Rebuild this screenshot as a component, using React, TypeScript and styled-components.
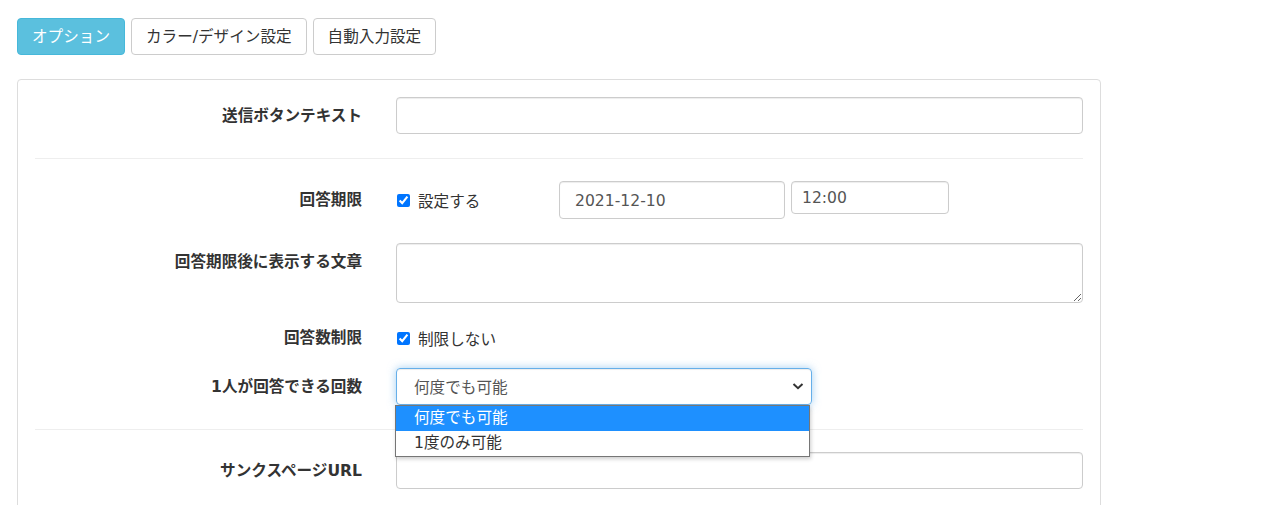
import React from "react";
import styled, { createGlobalStyle } from "styled-components";

const GlobalStyle = createGlobalStyle`
  body {
    margin: 0;
    background: #fff;
    font-family: "DejaVu Sans", "Noto Sans CJK JP", sans-serif;
    color: #333;
  }
`;

const Page = styled.div`
  padding: 18px 17px 0;
  height: 505px;
  box-sizing: border-box;
  overflow: hidden;
`;

const Tabs = styled.div`
  display: flex;
  gap: 6px;
  margin-bottom: 24px;
`;

const Tab = styled.button<{ $active?: boolean }>`
  height: 37px;
  padding: 0 14px;
  font-family: inherit;
  font-size: 15.6px;
  line-height: 22px;
  border-radius: 4px;
  border: 1px solid ${(p) => (p.$active ? "#46b8da" : "#ccc")};
  background: ${(p) => (p.$active ? "#5bc0de" : "#fff")};
  color: ${(p) => (p.$active ? "#fff" : "#333")};
  cursor: pointer;
`;

const Panel = styled.div`
  width: 1084px;
  box-sizing: border-box;
  border: 1px solid #ddd;
  border-radius: 4px;
  padding: 0 17px;
  height: 460px;
`;

const Section = styled.div<{ $pt: number; $pb: number }>`
  padding-top: ${(p) => p.$pt}px;
  padding-bottom: ${(p) => p.$pb}px;
  & + & {
    border-top: 1px solid #eee;
  }
`;

const Row = styled.div<{ $mb?: number }>`
  display: grid;
  grid-template-columns: 327px 687px;
  column-gap: 34px;
  align-items: start;
  margin-bottom: ${(p) => p.$mb ?? 0}px;
`;

const Label = styled.div<{ $pt?: number }>`
  text-align: right;
  font-weight: 700;
  font-size: 15.6px;
  line-height: 22px;
  padding-top: ${(p) => p.$pt ?? 8}px;
  color: #333;
`;

const TextInput = styled.input<{ $w?: number; $h?: number; $pl?: number }>`
  box-sizing: border-box;
  width: ${(p) => (p.$w ? `${p.$w}px` : "100%")};
  height: ${(p) => p.$h ?? 37}px;
  padding: 1px ${(p) => p.$pl ?? 12}px 0;
  border: 1px solid #ccc;
  border-radius: 4px;
  box-shadow: inset 0 1px 1px rgba(0, 0, 0, 0.075);
  font-family: inherit;
  font-size: 15.6px;
  color: #555;
  outline: none;
  display: block;
`;

const TextArea = styled.textarea`
  box-sizing: border-box;
  width: 100%;
  height: 60px;
  padding: 6px 12px;
  border: 1px solid #ccc;
  border-radius: 4px;
  box-shadow: inset 0 1px 1px rgba(0, 0, 0, 0.075);
  font-family: inherit;
  font-size: 15.6px;
  resize: vertical;
  display: block;
  outline: none;
`;

const Inline = styled.div`
  display: flex;
  align-items: flex-start;
  gap: 6px;
`;

const CheckLabel = styled.label<{ $h: number; $w?: number }>`
  display: flex;
  align-items: center;
  height: ${(p) => p.$h}px;
  width: ${(p) => (p.$w ? `${p.$w}px` : "auto")};
  font-size: 15.6px;
  color: #333;
  gap: 8px;

  input {
    margin: 1px 0 0 1px;
    width: 13px;
    height: 13px;
    accent-color: #0075ff;
  }
`;

const SelectWrap = styled.div`
  position: relative;
  width: 416px;
`;

const SelectBox = styled.div`
  box-sizing: border-box;
  height: 37px;
  border: 1px solid #66afe9;
  border-radius: 4px;
  box-shadow: inset 0 1px 1px rgba(0, 0, 0, 0.075),
    0 0 8px rgba(102, 175, 233, 0.6);
  display: flex;
  align-items: center;
  justify-content: space-between;
  padding: 0 6px 1px 17px;
  font-size: 15.6px;
  color: #555;
`;

const Dropdown = styled.ul`
  position: absolute;
  top: 37px;
  left: -1px;
  width: 415px;
  box-sizing: border-box;
  margin: 0;
  padding: 0;
  list-style: none;
  background: #fff;
  border: 1px solid #767676;
  box-shadow: 1px 2px 4px rgba(0, 0, 0, 0.2);
  z-index: 2;
`;

const Option = styled.li<{ $selected?: boolean }>`
  height: 25px;
  line-height: 25px;
  padding-left: 18px;
  font-size: 15.6px;
  background: ${(p) => (p.$selected ? "#1e90ff" : "#fff")};
  color: ${(p) => (p.$selected ? "#fff" : "#333")};
`;

const Chevron = () => (
  <svg width="14" height="14" viewBox="0 0 14 14">
    <path
      d="M2.5 5 L7 9.2 L11.5 5"
      fill="none"
      stroke="#333"
      strokeWidth="2"
      strokeLinejoin="miter"
    />
  </svg>
);

export default function App() {
  return (
    <Page>
      <GlobalStyle />
      <Tabs>
        <Tab $active>オプション</Tab>
        <Tab>カラー/デザイン設定</Tab>
        <Tab>自動入力設定</Tab>
      </Tabs>
      <Panel>
        <Section $pt={17} $pb={24}>
          <Row>
            <Label>送信ボタンテキスト</Label>
            <TextInput type="text" />
          </Row>
        </Section>
        <Section $pt={22} $pb={24}>
          <Row $mb={24}>
            <Label>回答期限</Label>
            <Inline>
              <CheckLabel $h={38} $w={157}>
                <input type="checkbox" checked readOnly />
                設定する
              </CheckLabel>
              <TextInput type="text" $w={226} $h={38} $pl={15} defaultValue="2021-12-10" />
              <TextInput type="text" $w={158} $h={33} $pl={10} defaultValue="12:00" />
            </Inline>
          </Row>
          <Row $mb={24}>
            <Label>回答期限後に表示する文章</Label>
            <TextArea />
          </Row>
          <Row $mb={19}>
            <Label $pt={0}>回答数制限</Label>
            <CheckLabel $h={22}>
              <input type="checkbox" checked readOnly />
              制限しない
            </CheckLabel>
          </Row>
          <Row>
            <Label>1人が回答できる回数</Label>
            <SelectWrap>
              <SelectBox>
                <span>何度でも可能</span>
                <Chevron />
              </SelectBox>
              <Dropdown>
                <Option $selected>何度でも可能</Option>
                <Option>1度のみ可能</Option>
              </Dropdown>
            </SelectWrap>
          </Row>
        </Section>
        <Section $pt={22} $pb={24}>
          <Row>
            <Label>サンクスページURL</Label>
            <TextInput type="text" />
          </Row>
        </Section>
      </Panel>
    </Page>
  );
}
